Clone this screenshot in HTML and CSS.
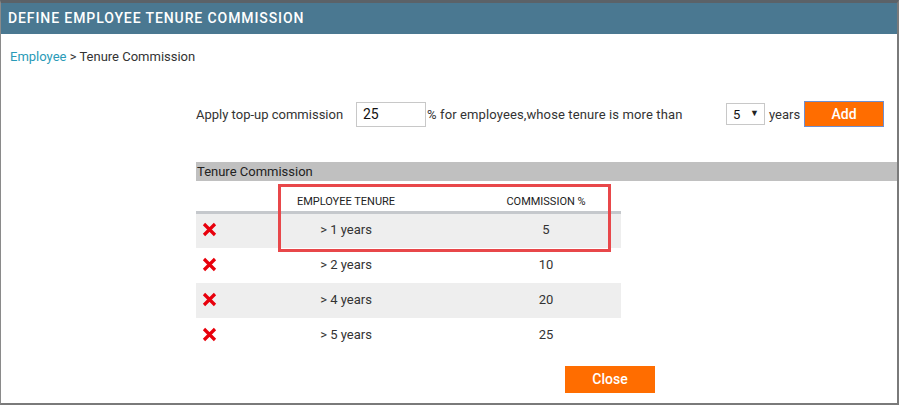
FILE: index.html
```html
<!DOCTYPE html>
<html>
<head>
<meta charset="utf-8">
<link rel="stylesheet" href="styles.css">
</head>
<body>
<div class="frame">
  <div class="title">DEFINE EMPLOYEE TENURE COMMISSION</div>
  <div class="crumb"><span class="link">Employee</span> &gt; Tenure Commission</div>
  <div class="content">
    <div class="apply">
      <span class="lbl1">Apply top-up commission</span>
      <span class="input">25</span>
      <span class="lbl2">% for employees,whose tenure is more than</span>
      <span class="select"><span>5</span><span class="arrow">▼</span></span>
      <span class="lbl3">years</span>
      <span class="btn add">Add</span>
    </div>
    <div class="bar">Tenure Commission</div>
    <div class="tablewrap">
      <table class="grid">
        <thead>
          <tr><th class="c1"></th><th class="c2">EMPLOYEE TENURE</th><th class="c3">COMMISSION %</th></tr>
        </thead>
        <tbody>
          <tr class="odd"><td class="c1"><svg class="x" viewBox="0 0 15 15"><path d="M2 2L13 13M13 2L2 13" stroke="#e8000c" stroke-width="3.2"/></svg></td><td class="c2">&gt; 1 years</td><td class="c3">5</td></tr>
          <tr><td class="c1"><svg class="x" viewBox="0 0 15 15"><path d="M2 2L13 13M13 2L2 13" stroke="#e8000c" stroke-width="3.2"/></svg></td><td class="c2">&gt; 2 years</td><td class="c3">10</td></tr>
          <tr class="odd"><td class="c1"><svg class="x" viewBox="0 0 15 15"><path d="M2 2L13 13M13 2L2 13" stroke="#e8000c" stroke-width="3.2"/></svg></td><td class="c2">&gt; 4 years</td><td class="c3">20</td></tr>
          <tr><td class="c1"><svg class="x" viewBox="0 0 15 15"><path d="M2 2L13 13M13 2L2 13" stroke="#e8000c" stroke-width="3.2"/></svg></td><td class="c2">&gt; 5 years</td><td class="c3">25</td></tr>
        </tbody>
      </table>
      <div class="highlight"></div>
    </div>
    <div class="footer"><span class="btn close">Close</span></div>
  </div>
</div>
</body>
</html>
```
FILE: styles.css
```css
html, body { margin: 0; padding: 0; background: #fff; }
body { font-family: Roboto, "Liberation Sans", sans-serif; color: #333; font-size: 13px; }
.frame {
  width: 899px; height: 405px; box-sizing: border-box;
  border-top: 3px solid #5b6268; border-left: 1px solid #8a8a8a;
  border-right: 2px solid #7a7a7a; border-bottom: 2px solid #7a7a7a;
  overflow: hidden;
}
.title {
  height: 31px; background: #4a7891; color: #fff;
  font-size: 14px; font-weight: 500; letter-spacing: 0.9px;
  line-height: 31px; padding-left: 7px;
}
.crumb { margin-top: 15px; padding-left: 9px; line-height: 16px; color: #333; }
.link { color: #2a9bb8; }
.content { padding-left: 195px; }
.apply { margin-top: 36px; height: 26px; display: flex; align-items: center; }
.lbl1 { width: 160px; }
.input {
  width: 70px; height: 25px; box-sizing: border-box; border: 1px solid #c8c8c8;
  padding-left: 6px; line-height: 23px; color: #111; font-size: 14px;
}
.lbl2 { margin-left: 1px; width: 299px; letter-spacing: 0.12px; }
.select {
  width: 39px; height: 22px; box-sizing: border-box; border: 1px solid #c8c8c8;
  display: flex; align-items: center; justify-content: space-between;
  padding: 0 5px 0 6px; color: #111; font-size: 13px;
}
.arrow { font-size: 9px; color: #222; margin-top: -2px; }
.lbl3 { margin-left: 4px; width: 35px; }
.btn { background: #ff6d00; color: #fff; font-size: 14px; font-weight: 500; display: flex; align-items: center; justify-content: center; box-sizing: border-box; }
.add { width: 80px; height: 26px; border: 1px solid #6e8fd0; }
.bar { margin-top: 35px; height: 19px; background: #c0c0c0; color: #222; line-height: 19px; padding-left: 1px; }
.tablewrap { position: relative; width: 425px; }
.grid { border-collapse: collapse; width: 425px; table-layout: fixed; }
.grid th { height: 27px; font-size: 11px; line-height: 13px; font-weight: 400; color: #222; text-align: center; vertical-align: bottom; padding: 0 0 3px; border-bottom: 3px solid #c5c8cc; }
.grid td { height: 35px; padding: 0 0 2px; box-sizing: border-box; text-align: center; vertical-align: middle; color: #333; }
.grid tr.odd td { background: #eeeeee; }
.c1 { width: 50px; }
.c2 { width: 200px; }
.c3 { width: 175px; padding-left: 25px !important; box-sizing: border-box; }
.grid td.c1 { text-align: left; padding-left: 6px; }
.x { width: 15px; height: 15px; display: block; }
.highlight {
  position: absolute; left: 82px; top: 3px; width: 333px; height: 68px;
  box-sizing: border-box; border: 3px solid #e8474a;
}
.footer { margin-top: 13px; padding-left: 369px; }
.close { width: 90px; height: 27px; }
```
